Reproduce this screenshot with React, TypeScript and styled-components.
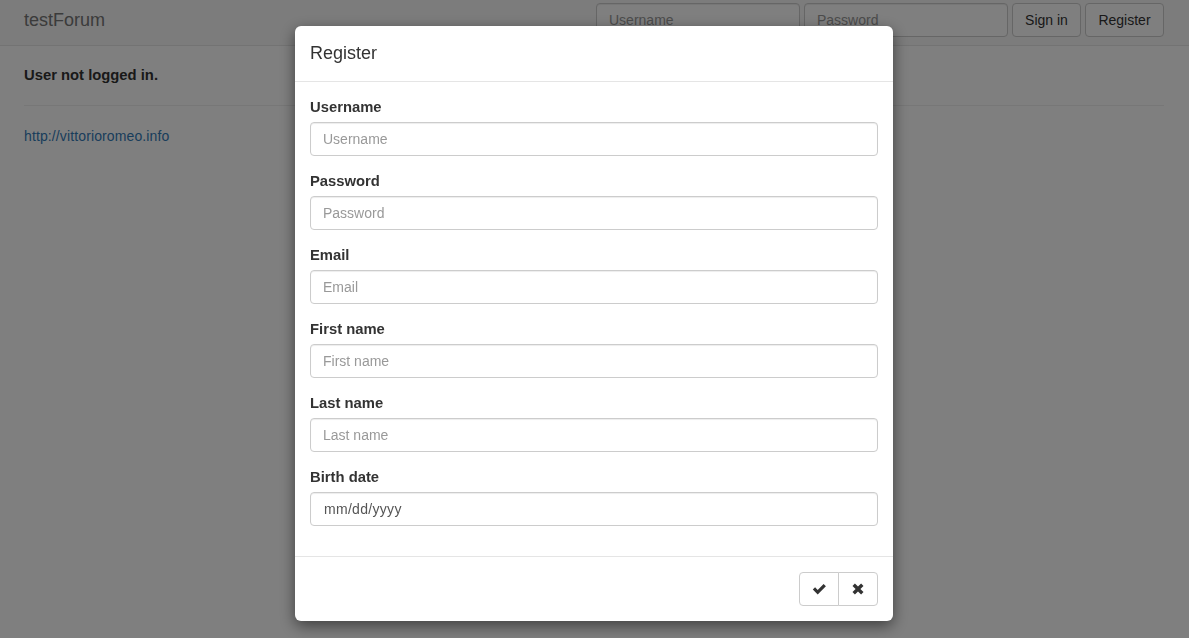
import React from "react";
import styled, { createGlobalStyle } from "styled-components";

const GlobalStyle = createGlobalStyle`
  * { box-sizing: border-box; }
  html, body { margin: 0; padding: 0; }
  body {
    font-family: "Liberation Sans", Arial, Helvetica, sans-serif;
    font-size: 14px;
    line-height: 1.42857143;
    color: #333;
    background: #fff;
    overflow: hidden;
  }
`;

const Navbar = styled.nav`
  height: 46px;
  background: #f8f8f8;
  border-bottom: 1px solid #e7e7e7;
`;

const Container = styled.div`
  width: 1170px;
  margin: 0 auto;
  padding: 0 15.5px 0 14.5px;
`;

const NavInner = styled(Container)`
  display: flex;
  align-items: flex-start;
  justify-content: space-between;
  padding-top: 3px;
`;

const Brand = styled.span`
  font-size: 18px;
  line-height: 20px;
  color: #777;
  padding-top: 7px;
`;

const NavForm = styled.form`
  display: flex;
  gap: 4px;
`;

const NavInput = styled.input`
  width: 204px;
  height: 34px;
  padding: 6px 12px;
  font-family: inherit;
  font-size: 14px;
  color: #555;
  background: #fff;
  border: 1px solid #ccc;
  border-radius: 4px;
  box-shadow: inset 0 1px 1px rgba(0, 0, 0, 0.075);
  &::placeholder { color: #999; }
`;

const Btn = styled.button<{ $w: number }>`
  width: ${(p) => p.$w}px;
  height: 34px;
  padding: 6px 0;
  font-family: inherit;
  font-size: 14px;
  line-height: 20px;
  color: #333;
  background: #fff;
  border: 1px solid #ccc;
  border-radius: 4px;
`;

const Main = styled(Container)`
  padding-top: 19px;
`;

const Status = styled.p`
  margin: 0;
  font-weight: bold;
  font-size: 14.8px;
  line-height: 20px;
`;

const Rule = styled.hr`
  margin: 20px 0;
  border: 0;
  border-top: 1px solid #eee;
`;

const Link = styled.a`
  color: #337ab7;
  text-decoration: none;
  letter-spacing: 0.12px;
`;

const Backdrop = styled.div`
  position: fixed;
  inset: 0;
  background: rgba(0, 0, 0, 0.5);
  display: flex;
  justify-content: center;
  align-items: flex-start;
  padding: 26px 1px 0 0;
`;

const Modal = styled.div`
  width: 598px;
  background: #fff;
  border-radius: 6px;
  box-shadow: 0 5px 15px rgba(0, 0, 0, 0.5);
`;

const ModalHeader = styled.div`
  padding: 15px;
  border-bottom: 1px solid #e5e5e5;
`;

const ModalTitle = styled.h4`
  margin: 0;
  font-size: 18px;
  font-weight: 500;
  line-height: 25px;
  color: #333;
`;

const ModalBody = styled.div`
  padding: 15px;
`;

const FormGroup = styled.div`
  margin-bottom: 15px;
`;

const Label = styled.label`
  display: block;
  margin-bottom: 5px;
  font-weight: bold;
  font-size: 14.8px;
  line-height: 20px;
`;

const Input = styled.input<{ $date?: boolean }>`
  display: block;
  width: 100%;
  height: 34px;
  padding: 6px ${(p) => (p.$date ? "13px" : "12px")};
  font-family: inherit;
  font-size: 14px;
  letter-spacing: ${(p) => (p.$date ? "0.3px" : "normal")};
  color: #555;
  background: #fff;
  border: 1px solid #ccc;
  border-radius: 4px;
  box-shadow: inset 0 1px 1px rgba(0, 0, 0, 0.075);
  outline: none;
  &::placeholder { color: ${(p) => (p.$date ? "#555" : "#999")}; }
`;

const ModalFooter = styled.div`
  padding: 15px;
  border-top: 1px solid #e5e5e5;
  display: flex;
  justify-content: flex-end;
`;

const BtnGroup = styled.div`
  display: flex;
`;

const GroupBtn = styled.button<{ $pos: "first" | "last" }>`
  width: 40px;
  height: 34px;
  padding: 0;
  display: flex;
  align-items: center;
  justify-content: center;
  background: #fff;
  border: 1px solid #ccc;
  color: #333;
  border-radius: ${(p) => (p.$pos === "first" ? "4px 0 0 4px" : "0 4px 4px 0")};
  margin-left: ${(p) => (p.$pos === "last" ? "-1px" : "0")};
`;

const OkIcon = () => (
  <svg width="15" height="12" viewBox="0 0 15 12" aria-hidden="true">
    <path d="M0.8 6.6 L3.1 4.3 L5.7 6.9 L11.6 1 L13.9 3.3 L5.7 11.5 Z" fill="#333" />
  </svg>
);

const RemoveIcon = () => (
  <svg width="12" height="12" viewBox="0 0 12 12" aria-hidden="true">
    <path
      d="M0.5 2.9 L2.9 0.5 L6 3.6 L9.1 0.5 L11.5 2.9 L8.4 6 L11.5 9.1 L9.1 11.5 L6 8.4 L2.9 11.5 L0.5 9.1 L3.6 6 Z"
      fill="#333"
    />
  </svg>
);

const fields = [
  { label: "Username", type: "text" },
  { label: "Password", type: "password" },
  { label: "Email", type: "email" },
  { label: "First name", type: "text" },
  { label: "Last name", type: "text" },
];

export default function App() {
  return (
    <>
      <GlobalStyle />
      <Navbar>
        <NavInner>
          <Brand>testForum</Brand>
          <NavForm onSubmit={(e) => e.preventDefault()}>
            <NavInput placeholder="Username" />
            <NavInput type="password" placeholder="Password" />
            <Btn $w={69} type="button">Sign in</Btn>
            <Btn $w={79} type="button">Register</Btn>
          </NavForm>
        </NavInner>
      </Navbar>
      <Main>
        <Status>User not logged in.</Status>
        <Rule />
        <Link href="#">http://vittorioromeo.info</Link>
      </Main>
      <Backdrop>
        <Modal>
          <ModalHeader>
            <ModalTitle>Register</ModalTitle>
          </ModalHeader>
          <ModalBody>
            {fields.map((f) => (
              <FormGroup key={f.label}>
                <Label>{f.label}</Label>
                <Input type={f.type} placeholder={f.label} />
              </FormGroup>
            ))}
            <FormGroup>
              <Label>Birth date</Label>
              <Input $date placeholder="mm/dd/yyyy" />
            </FormGroup>
          </ModalBody>
          <ModalFooter>
            <BtnGroup>
              <GroupBtn $pos="first" type="button"><OkIcon /></GroupBtn>
              <GroupBtn $pos="last" type="button"><RemoveIcon /></GroupBtn>
            </BtnGroup>
          </ModalFooter>
        </Modal>
      </Backdrop>
    </>
  );
}
